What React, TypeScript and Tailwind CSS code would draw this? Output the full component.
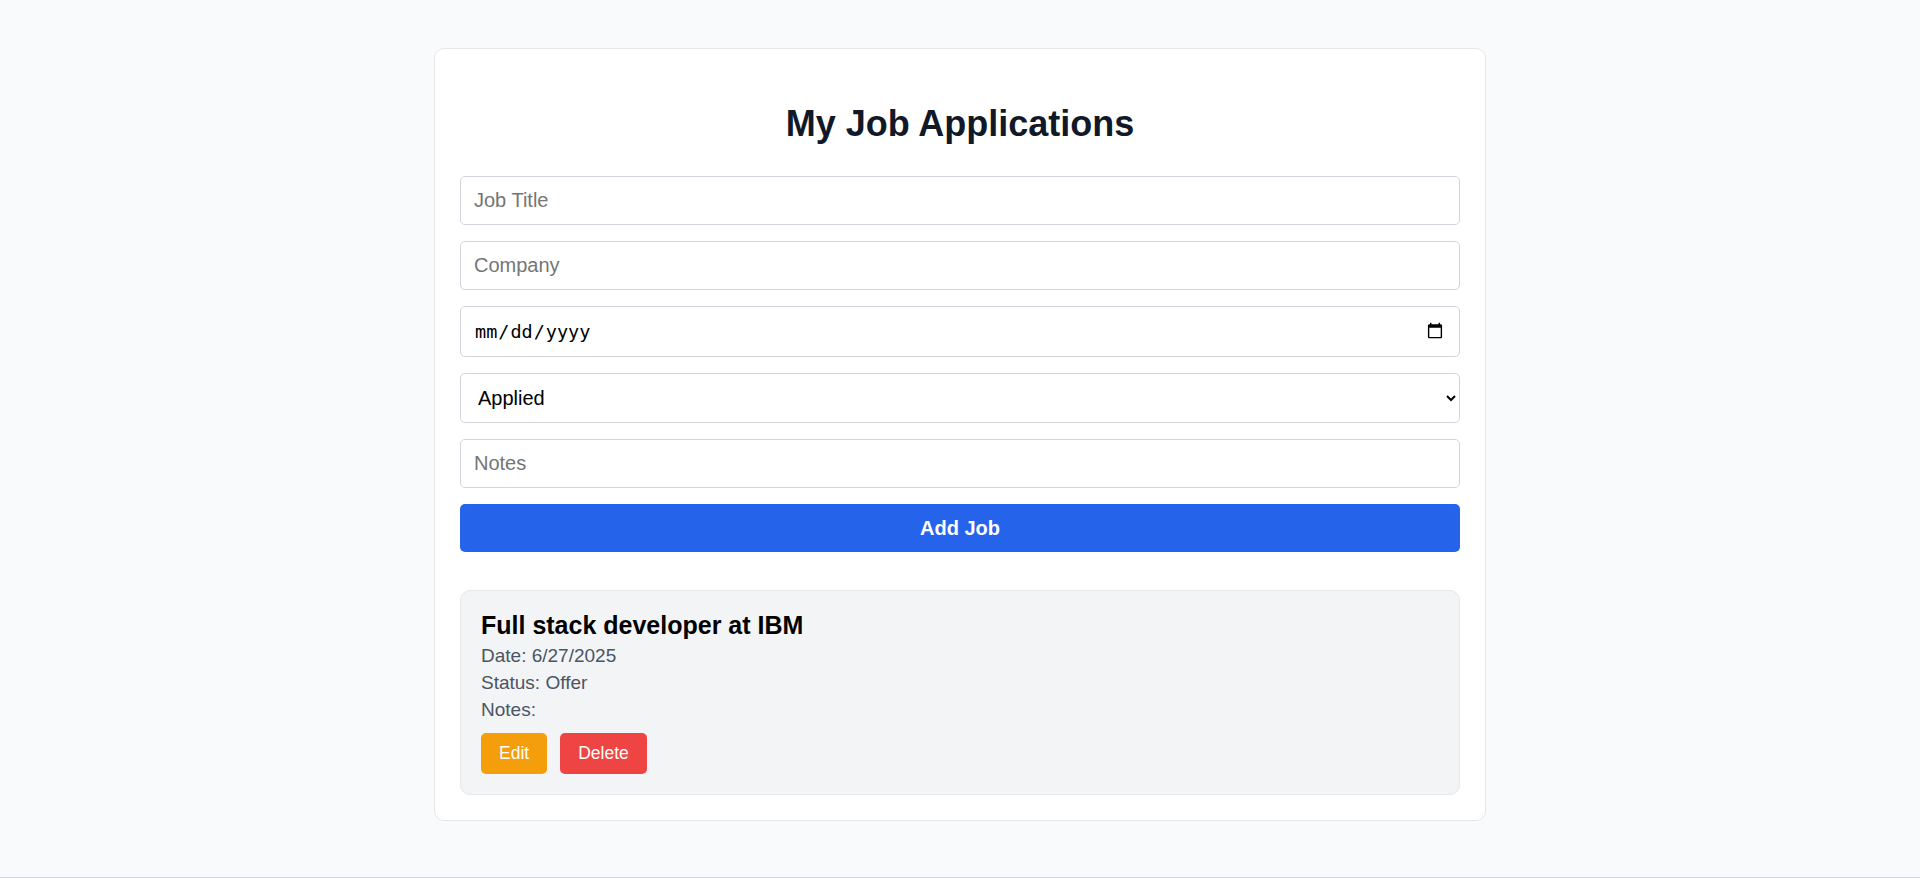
import { useState } from 'react';

type Job = {
  id: number;
  title: string;
  company: string;
  date: string;
  status: string;
  notes: string;
};

const inputBase =
  'w-full rounded-[5px] border border-[#d1d5db] bg-white px-[13px] text-[20px] text-black outline-none placeholder:text-[#757575]';

export default function App() {
  const [jobs] = useState<Job[]>([
    { id: 1, title: 'Full stack developer', company: 'IBM', date: '6/27/2025', status: 'Offer', notes: '' },
  ]);

  return (
    <div className="flex min-h-screen flex-col bg-[#f9fafb] font-['Liberation_Sans',Arial,sans-serif]">
      <div className="flex-1 pt-12">
        <div className="mx-auto w-[1052px] rounded-[10px] border border-[#e5e7eb] bg-white p-[25px]">
          <h1 className="mt-[28px] mb-[31px] text-center text-[36px] leading-[43px] font-bold text-[#111827]">
            My Job Applications
          </h1>

          {/* add form */}
          <form className="flex flex-col gap-4" onSubmit={(e) => e.preventDefault()}>
            <input className={`${inputBase} h-[49px]`} placeholder="Job Title" />
            <input className={`${inputBase} h-[49px]`} placeholder="Company" />
            <input
              type="date"
              className="h-[51px] w-full rounded-[5px] border border-[#d1d5db] bg-white px-[13px] font-['DejaVu_Sans_Mono',monospace] text-[18.5px] text-black outline-none"
            />
            <select
              defaultValue="Applied"
              className="h-[50px] w-full rounded-[5px] border border-[#d1d5db] bg-white px-[13px] text-[20px] text-black outline-none"
            >
              <option>Applied</option>
              <option>Interview</option>
              <option>Offer</option>
              <option>Rejected</option>
            </select>
            <input className={`${inputBase} h-[49px]`} placeholder="Notes" />
            <button
              type="submit"
              className="h-[48px] w-full rounded-[5px] bg-[#2563eb] text-[20px] font-bold text-white"
            >
              Add Job
            </button>
          </form>

          {/* job list */}
          <div className="mt-[38px] flex flex-col gap-4">
            {jobs.map((job) => (
              <div key={job.id} className="rounded-[10px] border border-[#e5e7eb] bg-[#f3f4f6] p-[20px]">
                <h2 className="text-[25px] leading-[29px] font-bold text-black">
                  {job.title} at {job.company}
                </h2>
                <div className="mt-[2px] text-[19px] leading-[27px] text-[#4b5563]">
                  <p>Date: {job.date}</p>
                  <p>Status: {job.status}</p>
                  <p>Notes: {job.notes}</p>
                </div>
                <div className="mt-[10px] flex gap-[13px]">
                  <button className="h-[41px] rounded-[5px] bg-[#f59e0b] px-[18px] text-[17.5px] text-white">
                    Edit
                  </button>
                  <button className="h-[41px] rounded-[5px] bg-[#ef4444] px-[18px] text-[17.5px] text-white">
                    Delete
                  </button>
                </div>
              </div>
            ))}
          </div>
        </div>
      </div>
      <div className="h-px bg-[#d1d5db]" />
    </div>
  );
}
